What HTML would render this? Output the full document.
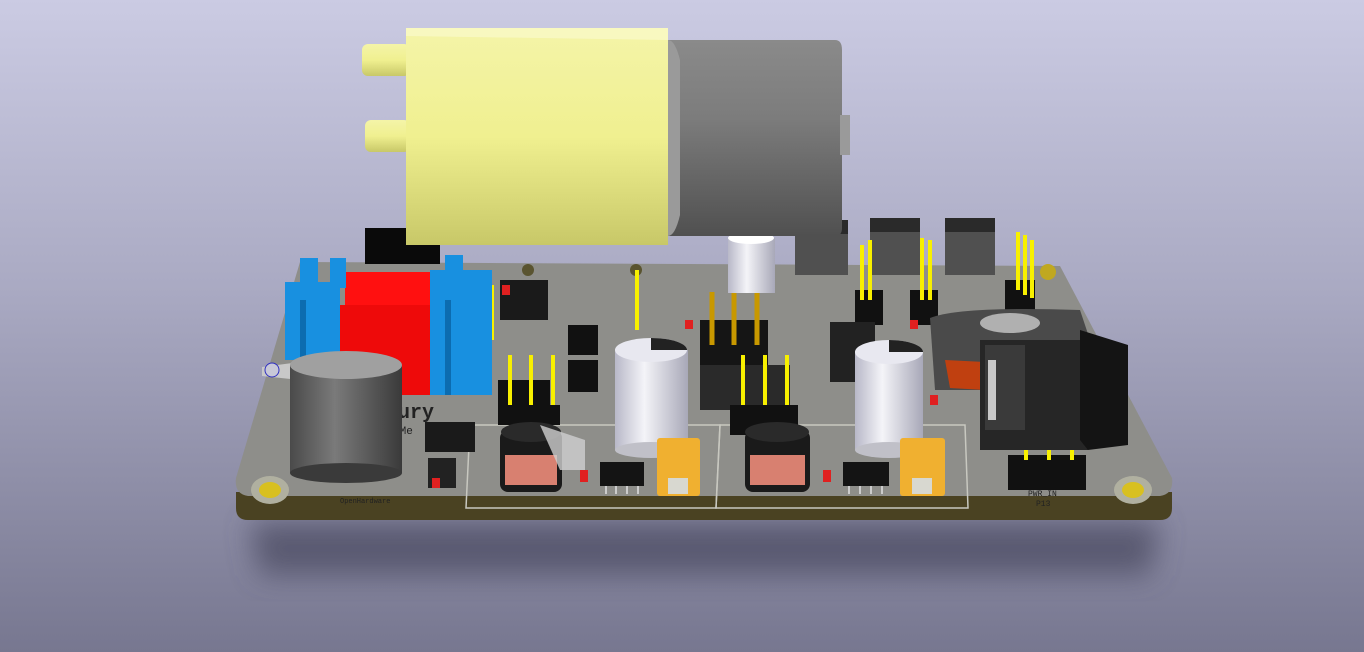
<!DOCTYPE html>
<html><head><meta charset="utf-8"><style>
html,body{margin:0;padding:0;width:1364px;height:652px;overflow:hidden}
body{background:linear-gradient(#cbcbe3 0%,#a9a9c2 45%,#777790 100%)}
svg{display:block}
text{font-family:"Liberation Mono",monospace}
</style></head><body>
<svg width="1364" height="652" viewBox="0 0 1364 652">
<defs>
<linearGradient id="yel" x1="0" x2="0" y1="0" y2="1"><stop offset="0" stop-color="#f4f4a8"/><stop offset=".5" stop-color="#f0f090"/><stop offset="1" stop-color="#c8c868"/></linearGradient>
<linearGradient id="mot" x1="0" x2="0" y1="0" y2="1"><stop offset="0" stop-color="#8a8a8a"/><stop offset=".4" stop-color="#7c7c7c"/><stop offset="1" stop-color="#505050"/></linearGradient>
<linearGradient id="cap" x1="0" x2="1"><stop offset="0" stop-color="#b8b8c8"/><stop offset=".4" stop-color="#f4f4f8"/><stop offset="1" stop-color="#a8a8b8"/></linearGradient>
<linearGradient id="buz" x1="0" x2="1"><stop offset="0" stop-color="#4a4a4a"/><stop offset=".4" stop-color="#7a7a7a"/><stop offset="1" stop-color="#3a3a3a"/></linearGradient>
<filter id="blur" x="-20%" y="-50%" width="140%" height="200%"><feGaussianBlur stdDeviation="14"/></filter>
</defs>
<!-- shadow -->
<path d="M250 522 L1160 522 L1150 575 L260 575 Z" fill="#4c4c62" opacity=".75" filter="url(#blur)"/>
<!-- board edge -->
<path d="M236 492 L1172 492 L1172 508 Q1172 520 1160 520 L248 520 Q236 520 236 508 Z" fill="#4a4222"/>
<!-- board top -->
<path d="M300 262 L1060 266 L1172 478 Q1174 494 1160 496 L248 496 Q234 494 236 478 Z" fill="#8e8e8a"/>
<path d="M470 425 L720 425 L716 508 L466 508 Z" fill="none" stroke="#c8c8c0" stroke-width="1.5"/>
<path d="M720 425 L965 425 L968 508 L716 508 Z" fill="none" stroke="#c8c8c0" stroke-width="1.5"/>
<ellipse cx="270" cy="490" rx="19" ry="14" fill="#b0b0a0"/><ellipse cx="270" cy="490" rx="11" ry="8" fill="#d8c020"/>
<ellipse cx="1133" cy="490" rx="19" ry="14" fill="#b0b0a0"/><ellipse cx="1133" cy="490" rx="11" ry="8" fill="#d8c020"/>
<circle cx="528" cy="270" r="6" fill="#5a5430"/><circle cx="636" cy="270" r="6" fill="#5a5430"/><circle cx="1048" cy="272" r="8" fill="#c0a820"/>
<text x="362" y="418" font-size="20" fill="#222" font-weight="bold">ercury</text>
<text x="360" y="434" font-size="11" fill="#222">ssure Me</text>
<text x="705" y="387" font-size="11" fill="#ddd">TQFP32</text>
<text x="1028" y="496" font-size="8" fill="#222">PWR_IN</text>
<text x="1036" y="506" font-size="8" fill="#222">P13</text>
<text x="340" y="503" font-size="7" fill="#222">OpenHardware</text>
<!-- top right ICs -->
<rect x="795" y="220" width="53" height="55" fill="#505050"/><rect x="795" y="220" width="53" height="14" fill="#2a2a2a"/>
<rect x="870" y="218" width="50" height="57" fill="#505050"/><rect x="870" y="218" width="50" height="14" fill="#2a2a2a"/>
<rect x="945" y="218" width="50" height="57" fill="#505050"/><rect x="945" y="218" width="50" height="14" fill="#2a2a2a"/>
<!-- black headers -->
<rect x="855" y="290" width="28" height="35" fill="#111"/><rect x="910" y="290" width="28" height="35" fill="#111"/><rect x="1005" y="280" width="30" height="30" fill="#111"/>
<rect x="700" y="320" width="68" height="45" fill="#151515"/>
<rect x="700" y="365" width="90" height="45" fill="#2a2a2a"/>
<rect x="830" y="322" width="45" height="60" fill="#222"/>
<rect x="500" y="280" width="48" height="40" fill="#1a1a1a"/>
<rect x="568" y="325" width="30" height="30" fill="#111"/><rect x="568" y="360" width="30" height="32" fill="#111"/>
<rect x="498" y="380" width="52" height="28" fill="#111"/>
<rect x="730" y="405" width="68" height="30" fill="#111"/>
<rect x="1008" y="455" width="78" height="35" fill="#111"/>
<rect x="425" y="422" width="50" height="30" fill="#1a1a1a"/>
<rect x="428" y="458" width="28" height="30" fill="#222"/>
<!-- red SMD -->
<g fill="#e02020"><rect x="502" y="285" width="8" height="10"/><rect x="685" y="320" width="8" height="9"/><rect x="910" y="320" width="8" height="9"/><rect x="580" y="470" width="8" height="12"/><rect x="823" y="470" width="8" height="12"/><rect x="930" y="395" width="8" height="10"/><rect x="432" y="478" width="8" height="10"/></g>
<!-- yellow pins -->
<g stroke="#f8f000" stroke-width="4">
<line x1="510" y1="355" x2="510" y2="412"/><line x1="531" y1="355" x2="531" y2="412"/><line x1="553" y1="355" x2="553" y2="412"/>
<line x1="743" y1="355" x2="743" y2="412"/><line x1="765" y1="355" x2="765" y2="412"/><line x1="787" y1="355" x2="787" y2="412"/>
<line x1="1026" y1="400" x2="1026" y2="462"/><line x1="1049" y1="400" x2="1049" y2="462"/><line x1="1072" y1="400" x2="1072" y2="462"/>
<line x1="637" y1="270" x2="637" y2="330"/><line x1="485" y1="290" x2="485" y2="370"/><line x1="492" y1="285" x2="492" y2="340"/>
<line x1="862" y1="245" x2="862" y2="300"/><line x1="870" y1="240" x2="870" y2="300"/><line x1="922" y1="238" x2="922" y2="300"/><line x1="930" y1="240" x2="930" y2="300"/>
<line x1="1018" y1="232" x2="1018" y2="290"/><line x1="1025" y1="235" x2="1025" y2="295"/><line x1="1032" y1="240" x2="1032" y2="298"/>
</g>
<g stroke="#c89800" stroke-width="5"><line x1="712" y1="292" x2="712" y2="345"/><line x1="734" y1="292" x2="734" y2="345"/><line x1="757" y1="292" x2="757" y2="345"/></g>
<!-- header bases -->
<rect x="498" y="405" width="62" height="20" fill="#111"/><rect x="732" y="405" width="66" height="20" fill="#111"/><rect x="1010" y="460" width="76" height="28" fill="#111"/>
<!-- white cap top -->
<rect x="728" y="238" width="47" height="55" fill="url(#cap)"/><ellipse cx="751" cy="238" rx="23" ry="6" fill="#fff"/>
<!-- battery holder -->
<path d="M930 318 Q960 306 1080 310 L1090 340 L1070 390 L935 390 Z" fill="#4a4a4a"/>
<ellipse cx="1010" cy="323" rx="30" ry="10" fill="#b0b0b0"/>
<path d="M945 360 L985 362 L985 390 L950 388 Z" fill="#c04010"/>
<!-- jack -->
<rect x="980" y="340" width="108" height="110" fill="#262626"/>
<path d="M1080 330 L1128 345 L1128 445 L1088 450 L1080 440 Z" fill="#141414"/>
<rect x="985" y="345" width="40" height="85" fill="#3a3a3a"/>
<rect x="988" y="360" width="8" height="60" fill="#c8c8c8"/>
<!-- caps -->
<rect x="615" y="350" width="73" height="100" fill="url(#cap)"/><ellipse cx="651" cy="450" rx="36" ry="8" fill="#c0c0c8"/>
<ellipse cx="651" cy="350" rx="36" ry="12" fill="#e8e8f0"/><path d="M651 338 A36 12 0 0 1 687 350 L651 350 Z" fill="#222"/>
<rect x="855" y="352" width="68" height="98" fill="url(#cap)"/><ellipse cx="889" cy="450" rx="34" ry="8" fill="#c0c0c8"/>
<ellipse cx="889" cy="352" rx="34" ry="12" fill="#e8e8f0"/><path d="M889 340 A34 12 0 0 1 923 352 L889 352 Z" fill="#222"/>
<!-- inductors -->
<g><rect x="500" y="430" width="62" height="62" rx="8" fill="#1a1a1a"/><rect x="505" y="455" width="52" height="30" fill="#d88070"/><ellipse cx="531" cy="432" rx="30" ry="10" fill="#2a2a2a"/><path d="M540 425 L585 440 L585 470 L560 470 Z" fill="#d0d0d0" opacity=".8"/></g>
<g><rect x="745" y="430" width="65" height="62" rx="8" fill="#1a1a1a"/><rect x="750" y="455" width="55" height="30" fill="#d88070"/><ellipse cx="777" cy="432" rx="32" ry="10" fill="#2a2a2a"/></g>
<!-- regulators -->
<rect x="600" y="462" width="44" height="24" fill="#141414"/><rect x="843" y="462" width="46" height="24" fill="#141414"/>
<g stroke="#ccc" stroke-width="2"><line x1="606" y1="486" x2="606" y2="494"/><line x1="616" y1="486" x2="616" y2="494"/><line x1="627" y1="486" x2="627" y2="494"/><line x1="638" y1="486" x2="638" y2="494"/><line x1="849" y1="486" x2="849" y2="494"/><line x1="860" y1="486" x2="860" y2="494"/><line x1="871" y1="486" x2="871" y2="494"/><line x1="882" y1="486" x2="882" y2="494"/></g>
<!-- tantalum -->
<rect x="657" y="438" width="43" height="58" rx="3" fill="#f0b030"/><rect x="668" y="478" width="20" height="16" fill="#d8d8d0"/>
<rect x="900" y="438" width="45" height="58" rx="3" fill="#f0b030"/><rect x="912" y="478" width="20" height="16" fill="#d8d8d0"/>
<!-- black block, red, blue -->
<rect x="365" y="228" width="75" height="36" fill="#0a0a0a"/>
<rect x="345" y="272" width="100" height="40" fill="#ff1010"/>
<rect x="340" y="305" width="110" height="90" fill="#ee0a0a"/>
<g fill="#1890e0">
<rect x="285" y="282" width="55" height="78"/><rect x="300" y="258" width="18" height="30"/><rect x="330" y="258" width="16" height="30"/><rect x="290" y="285" width="14" height="20"/>
<rect x="430" y="270" width="62" height="125"/><rect x="445" y="255" width="18" height="20"/>
</g>
<g fill="#0c6cb0"><rect x="300" y="300" width="6" height="60"/><rect x="445" y="300" width="6" height="95"/></g>
<!-- buzzer -->
<path d="M262 367 L300 362 L300 380 L262 376 Z" fill="#c8c8c8"/><circle cx="272" cy="370" r="7" fill="#c8c8d8" stroke="#3030c0" stroke-width="1"/>
<rect x="290" y="365" width="112" height="108" fill="url(#buz)"/>
<ellipse cx="346" cy="473" rx="56" ry="10" fill="#3a3a3a"/>
<ellipse cx="346" cy="365" rx="56" ry="14" fill="#a0a0a0"/>
<!-- yellow cylinder -->
<rect x="362" y="44" width="48" height="32" rx="6" fill="url(#yel)"/>
<rect x="365" y="120" width="45" height="32" rx="6" fill="url(#yel)"/>
<rect x="406" y="28" width="262" height="217" fill="url(#yel)"/>
<path d="M406 28 L668 28 L668 40 L406 36Z" fill="#f8f8c0"/>
<!-- motor -->
<path d="M668 40 L835 40 Q842 40 842 50 L842 228 Q842 236 835 236 L668 236 Z" fill="url(#mot)"/>
<path d="M668 40 Q675 40 680 60 L680 215 Q675 236 668 236 Z" fill="#9a9a9a"/>
<rect x="840" y="115" width="10" height="40" fill="#9a9a9a"/>
</svg>
</body></html>
